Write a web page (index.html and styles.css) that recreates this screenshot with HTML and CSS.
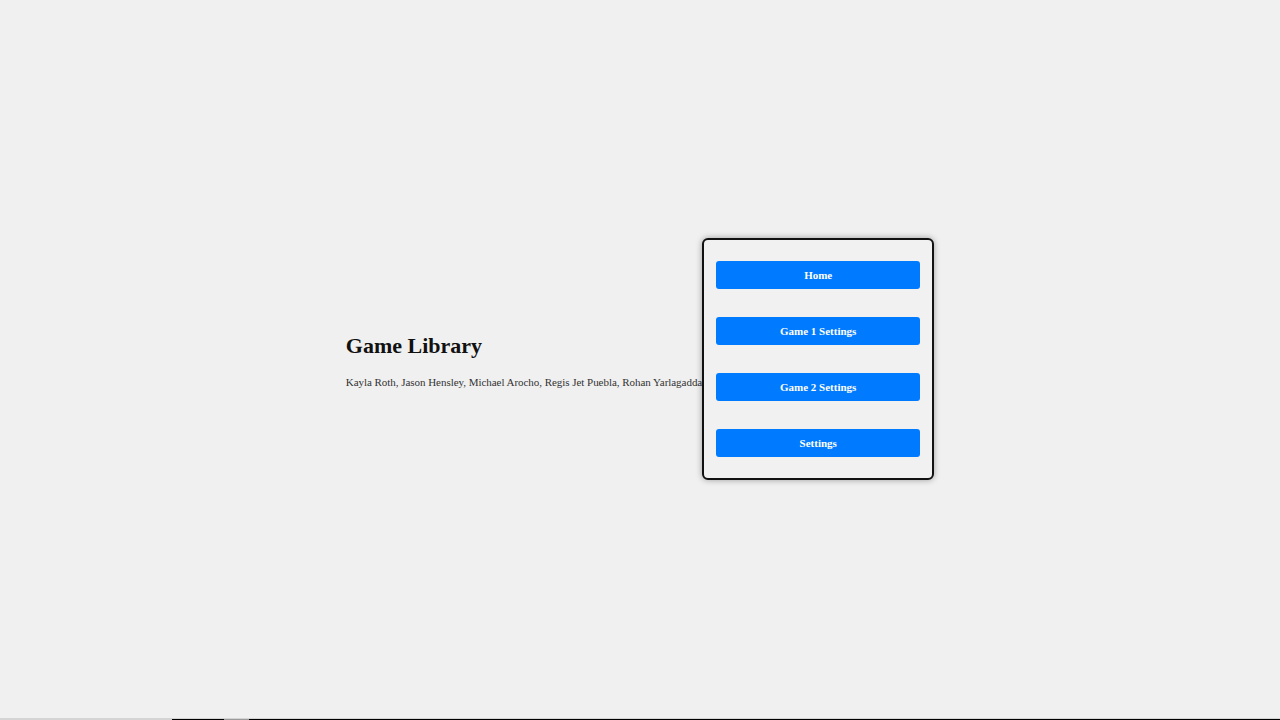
FILE: index.html
```html
<!DOCTYPE html>
<html lang="en">
<head>
<meta charset="utf-8">
<title>Game Library</title>
<link rel="stylesheet" href="styles.css">
</head>
<body>
<main class="stage">
  <section class="intro">
    <h1 class="title">Game Library</h1>
    <p class="authors">Kayla Roth, Jason Hensley, Michael Arocho, Regis Jet Puebla, Rohan Yarlagadda</p>
  </section>
  <nav class="menu">
    <button class="menu-btn">Home</button>
    <button class="menu-btn">Game 1 Settings</button>
    <button class="menu-btn">Game 2 Settings</button>
    <button class="menu-btn">Settings</button>
  </nav>
</main>
<div class="bottom-bar">
  <div class="bar-line"></div>
  <div class="bar-track">
    <span class="track-gap"></span>
    <span class="track-black short"></span>
    <span class="track-thumb"></span>
    <span class="track-black"></span>
  </div>
</div>
</body>
</html>
```

FILE: styles.css
```css
html, body {
  margin: 0;
  padding: 0;
}
body {
  height: 720px;
  background: #f0f0f0;
  font-family: "Liberation Serif", "Times New Roman", serif;
  display: flex;
  flex-direction: column;
  overflow: hidden;
}
.stage {
  flex: 1;
  display: flex;
  justify-content: center;
  align-items: center;
}
.intro {
  display: flex;
  flex-direction: column;
}
.title {
  font-size: 22px;
  font-weight: bold;
  color: #111;
  margin: 16px 0 15px;
  line-height: 28px;
}
.authors {
  font-size: 11px;
  color: #333;
  margin: 0 0 14px;
  line-height: 14px;
  letter-spacing: -0.04px;
  white-space: nowrap;
}
.menu {
  width: 204px;
  padding: 21px 12px 21px;
  border: 2px solid #111;
  border-radius: 6px;
  background: #f1f1f1;
  box-shadow: 0 0 6px rgba(0, 0, 0, 0.35);
  display: flex;
  flex-direction: column;
  gap: 28px;
}
.menu-btn {
  height: 28px;
  border: none;
  border-radius: 3px;
  background: #007bff;
  color: #fff;
  font-family: "Liberation Serif", "Times New Roman", serif;
  font-size: 11px;
  font-weight: bold;
  padding: 0;
}
.bottom-bar {
  height: 2px;
  display: flex;
  flex-direction: column;
}
.bar-line {
  height: 1px;
  background: #d4d4d4;
}
.bar-track {
  height: 1px;
  display: flex;
}
.track-gap {
  width: 172px;
  background: #d4d4d4;
}
.track-black {
  flex: 1;
  background: #000;
}
.track-black.short {
  flex: 0 0 52px;
}
.track-thumb {
  width: 25px;
  background: #9a9a9a;
}
```
